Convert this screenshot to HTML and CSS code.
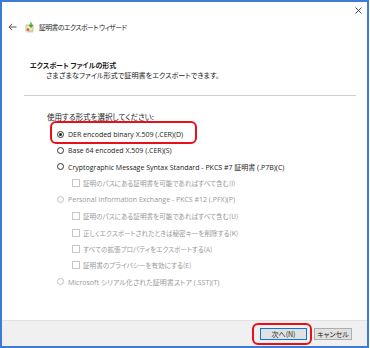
FILE: index.html
```html
<!DOCTYPE html>
<html lang="ja">
<head>
  <meta charset="UTF-8">
  <title>証明書のエクスポート ウィザード</title>
  <link rel="stylesheet" href="styles.css">
</head>
<body>
  <div class="wizard">
    <!-- Close button -->
    <div class="close-row">
      <svg class="close-icon" width="7" height="7" viewBox="0 0 7 7">
        <path d="M0.5 0.5 L6.5 6.5 M6.5 0.5 L0.5 6.5" stroke="#333" stroke-width="0.9" fill="none"/>
      </svg>
    </div>

    <!-- Title -->
    <div class="title-row">
      <svg class="back-icon" width="9" height="8" viewBox="0 0 9 8">
        <path d="M8.5 4 H1 M4.2 0.8 L1 4 L4.2 7.2" stroke="#555" stroke-width="1" fill="none"/>
      </svg>
      <svg class="cert-icon" width="10" height="11" viewBox="0 0 10 11">
        <rect x="1" y="3" width="7" height="6" fill="#f4e6b8" stroke="#b89c5a" stroke-width="0.6"/>
        <rect x="2" y="9" width="6" height="1.4" fill="#c8c8c8"/>
        <path d="M6 0.5 V4.5 M4.3 3 L6 5 L7.7 3" stroke="#2db52d" stroke-width="1.4" fill="none"/>
        <circle cx="3" cy="7.5" r="1.2" fill="#d05050"/>
      </svg>
      <span class="title-text">証明書のエクスポート ウィザード</span>
    </div>

    <!-- Page heading -->
    <div class="page-head">
      <div class="page-title">エクスポート ファイルの形式</div>
      <div class="page-desc">さまざまなファイル形式で証明書をエクスポートできます。</div>
    </div>
    <div class="separator"></div>

    <!-- Format choices -->
    <div class="choices">
      <div class="prompt">使用する形式を選択してください:</div>
      <div class="option highlight">
        <span class="radio checked"></span><span class="lat">DER encoded binary X.509 (.CER)(D)</span>
      </div>
      <div class="option">
        <span class="radio"></span><span class="lat">Base 64 encoded X.509 (.CER)(S)</span>
      </div>
      <div class="option">
        <span class="radio"></span><span class="lat">Cryptographic Message Syntax Standard - PKCS #7 証明書 (.P7B)(C)</span>
      </div>
      <div class="option sub disabled">
        <span class="check"></span><span>証明のパスにある証明書を可能であればすべて含む(I)</span>
      </div>
      <div class="option disabled">
        <span class="radio"></span><span class="lat">Personal Information Exchange - PKCS #12 (.PFX)(P)</span>
      </div>
      <div class="option sub disabled">
        <span class="check"></span><span>証明のパスにある証明書を可能であればすべて含む(U)</span>
      </div>
      <div class="option sub disabled">
        <span class="check"></span><span>正しくエクスポートされたときは秘密キーを削除する(K)</span>
      </div>
      <div class="option sub disabled">
        <span class="check"></span><span>すべての拡張プロパティをエクスポートする(A)</span>
      </div>
      <div class="option sub disabled">
        <span class="check"></span><span>証明書のプライバシーを有効にする(E)</span>
      </div>
      <div class="option disabled">
        <span class="radio"></span><span class="lat">Microsoft シリアル化された証明書ストア (.SST)(T)</span>
      </div>
    </div>

    <!-- Footer buttons -->
    <div class="footer">
      <button class="btn btn-default highlight">次へ(N)</button>
      <button class="btn">キャンセル</button>
    </div>
  </div>
</body>
</html>
```

FILE: styles.css
```css
body {
  margin: 0;
  padding: 0;
  background: #fff;
  font-family: "Noto Sans CJK JP", sans-serif;
  font-feature-settings: "palt";
  color: #1a1a1a;
}

.wizard {
  width: 369px;
  height: 348px;
  box-sizing: border-box;
  border: 2px solid #3d7bd6;
  display: flex;
  flex-direction: column;
  background: #fff;
}

.close-row {
  height: 16px;
  display: flex;
  justify-content: flex-end;
  align-items: center;
  padding-right: 5px;
}

.title-row {
  height: 18px;
  display: flex;
  align-items: center;
  padding-left: 6px;
}

.back-icon {
  margin-right: 8px;
}

.cert-icon {
  margin-right: 4px;
}

.title-text {
  font-size: 6.8px;
  letter-spacing: -0.5px;
  color: #222;
}

.page-head {
  padding: 24px 0 0 28px;
}

.page-title {
  font-size: 7px;
  font-weight: bold;
  line-height: 10px;
}

.page-desc {
  font-size: 7.1px;
  line-height: 11px;
  padding-left: 16px;
}

.separator {
  height: 1px;
  background: #cfcfcf;
  margin: 14px 11px 0 22px;
}

.choices {
  flex: 1;
  padding: 15px 0 0 45px;
  font-size: 7.5px;
}

.prompt {
  line-height: 11px;
  margin-bottom: 4px;
}

.option {
  height: 16.4px;
  display: flex;
  align-items: center;
  padding-left: 10px;
  position: relative;
  white-space: nowrap;
}

.option.sub {
  padding-left: 25px;
  font-size: 6.6px;
}

.lat {
  font-family: "Open Sans", "Noto Sans CJK JP", sans-serif;
  font-size: 7px;
}

.disabled {
  color: #999;
}

.radio {
  width: 7px;
  height: 7px;
  border: 1px solid #333;
  border-radius: 50%;
  box-sizing: border-box;
  margin-right: 4px;
  display: flex;
  align-items: center;
  justify-content: center;
}

.radio.checked::after {
  content: "";
  width: 3px;
  height: 3px;
  border-radius: 50%;
  background: #222;
}

.disabled .radio {
  border-color: #c0c0c0;
}

.check {
  width: 8px;
  height: 8px;
  border: 1px solid #c6c6c6;
  box-sizing: border-box;
  margin-right: 3px;
}

/* red annotation frames */
.option.highlight::after {
  content: "";
  position: absolute;
  left: 3px;
  top: -5px;
  width: 147px;
  height: 23px;
  box-sizing: border-box;
  border: 2px solid #e8101c;
  border-radius: 6px;
}

.footer {
  height: 25px;
  background: #f0f0f0;
  border-top: 1px solid #e2e2e2;
  display: flex;
  justify-content: flex-end;
  align-items: center;
  gap: 7px;
  padding-right: 15px;
}

.btn {
  height: 12px;
  padding: 0;
  font-family: "Noto Sans CJK JP", sans-serif;
  font-feature-settings: "palt";
  font-size: 7px;
  line-height: 10px;
  color: #222;
  background: #e1e1e1;
  border: 1px solid #adadad;
  width: 38px;
}

.btn-default {
  width: 47px;
  border-color: #0a78d7;
  position: relative;
}

.btn.highlight::after {
  content: "";
  position: absolute;
  left: -9px;
  top: -6px;
  right: -6px;
  bottom: -6px;
  border: 2px solid #e8101c;
  border-radius: 6px;
}
```
